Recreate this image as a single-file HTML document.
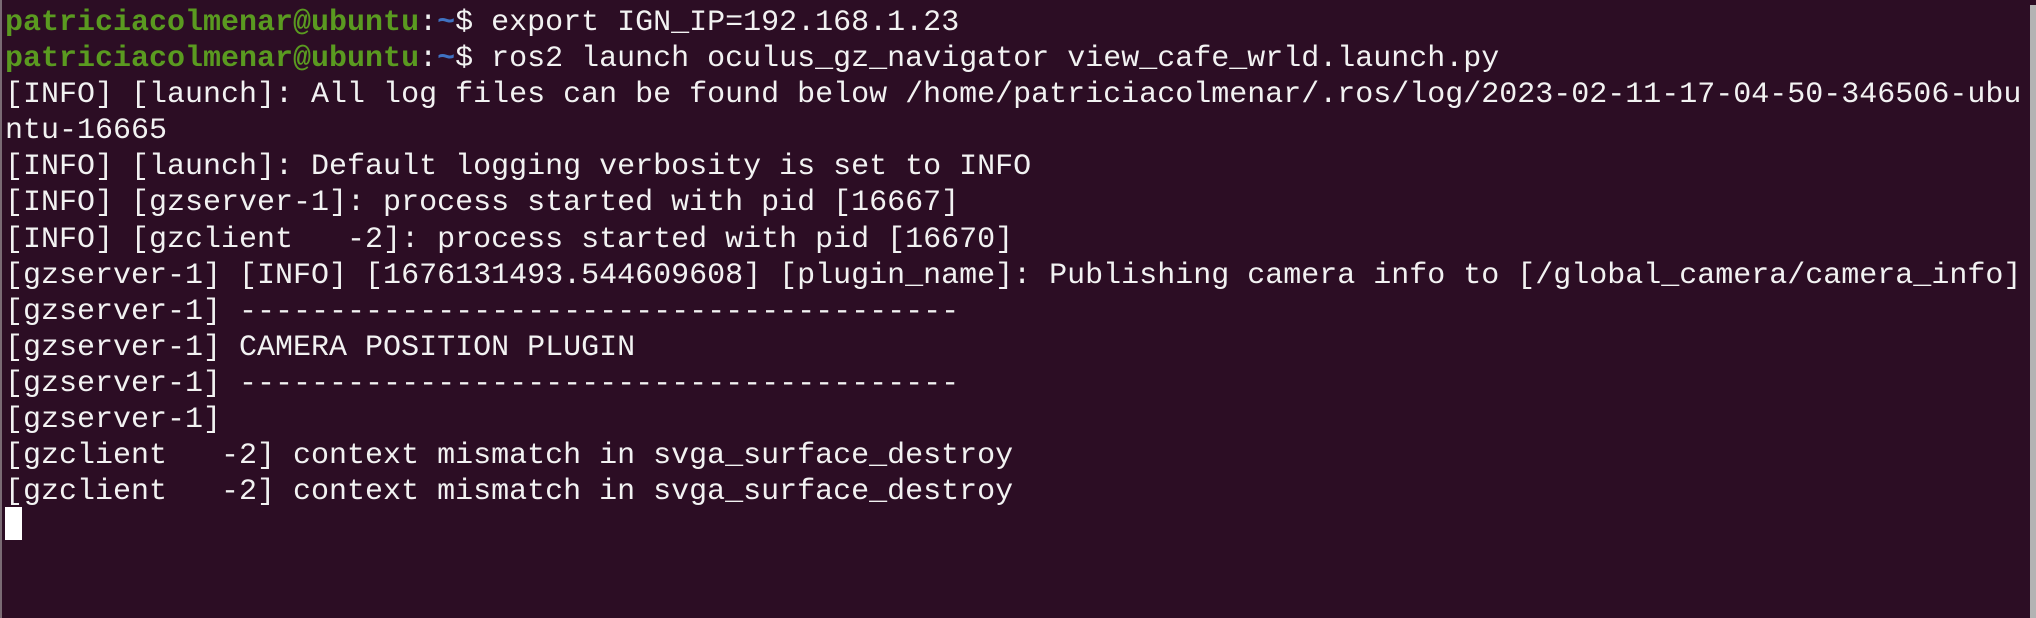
<!DOCTYPE html>
<html><head><meta charset="utf-8"><style>
html,body{margin:0;padding:0;}
body{width:2036px;height:618px;background:#2c0d24;overflow:hidden;position:relative;}
pre{position:absolute;left:5px;top:5px;margin:0;font-family:"Liberation Mono",monospace;font-size:30px;line-height:36.1px;color:#f2f2f2;white-space:pre;}
.g{color:#5a9a20;font-weight:bold;}
.b{color:#3f72c2;font-weight:bold;}
.cur{display:inline-block;width:17px;height:33px;background:#fff;vertical-align:top;margin-top:-3px;}
.lb{position:absolute;left:0;top:0;width:2px;height:618px;background:#7a6a74;}
.sb{position:absolute;right:0;top:5px;width:6px;height:613px;background:#b3b3b3;}
</style></head><body>
<div class="lb"></div><div class="sb"></div>
<pre><span class="g">patriciacolmenar@ubuntu</span>:<span class="b">~</span>$ export IGN_IP=192.168.1.23
<span class="g">patriciacolmenar@ubuntu</span>:<span class="b">~</span>$ ros2 launch oculus_gz_navigator view_cafe_wrld.launch.py
[INFO] [launch]: All log files can be found below /home/patriciacolmenar/.ros/log/2023-02-11-17-04-50-346506-ubu
ntu-16665
[INFO] [launch]: Default logging verbosity is set to INFO
[INFO] [gzserver-1]: process started with pid [16667]
[INFO] [gzclient   -2]: process started with pid [16670]
[gzserver-1] [INFO] [1676131493.544609608] [plugin_name]: Publishing camera info to [/global_camera/camera_info]
[gzserver-1] ----------------------------------------
[gzserver-1] CAMERA POSITION PLUGIN
[gzserver-1] ----------------------------------------
[gzserver-1] 
[gzclient   -2] context mismatch in svga_surface_destroy
[gzclient   -2] context mismatch in svga_surface_destroy
<span class="cur"></span></pre>
</body></html>
